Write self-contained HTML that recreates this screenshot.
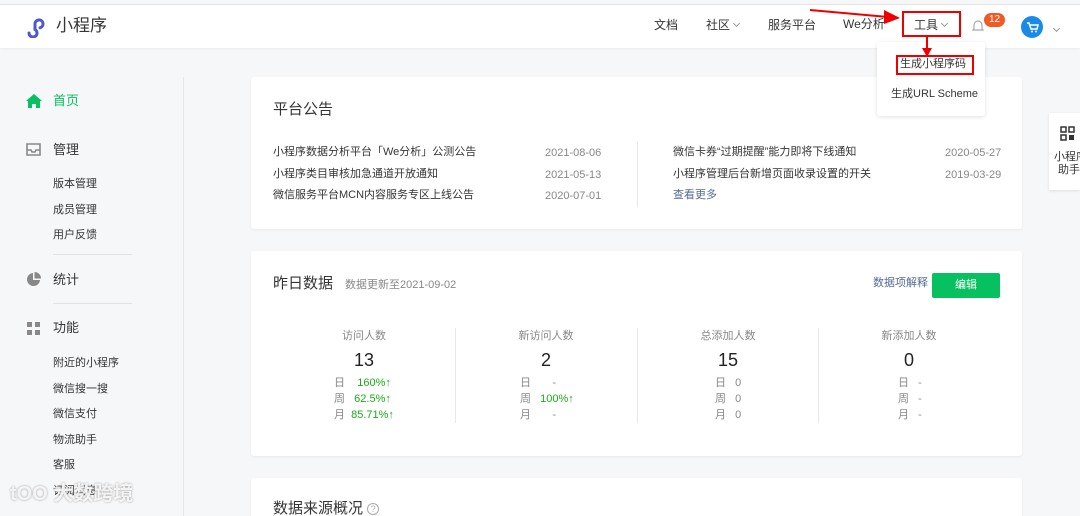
<!DOCTYPE html><html><head><meta charset="utf-8"><style>
*{margin:0;padding:0;box-sizing:border-box}
html,body{width:1080px;height:516px;overflow:hidden}
body{background:#f6f7f9;font-family:"Liberation Sans","Noto Sans CJK SC",sans-serif;color:#353535;position:relative}
.a{position:absolute;white-space:nowrap;line-height:1.25}
.hdr{position:absolute;left:0;top:4px;width:1080px;height:44px;background:#fff;border-top:1px solid #e4e4e4;box-shadow:0 1px 2px rgba(0,0,0,.05)}
.card{position:absolute;left:251px;width:771px;background:#fff;border-radius:3px;box-shadow:0 1px 2px rgba(0,0,0,.06)}
.nav{font-size:12px;color:#353535}
.sub{font-size:11px;color:#353535;left:53px}
.sep{position:absolute;left:53px;width:79px;height:1px;background:#e2e2e2}
.ann{font-size:11px;color:#353535}
.dt{font-size:11px;color:#888;top:auto}
.lbl{font-size:11px;color:#888;text-align:center;width:180px}
.num{font-size:18px;color:#222;text-align:center;width:180px}
.r{font-size:11px;color:#888}
.g{color:#1aad19}
.chev{display:inline-block;width:5px;height:5px;border-right:1px solid #999;border-bottom:1px solid #999;transform:rotate(45deg);margin-left:4px;vertical-align:3px}
</style></head><body>
<div class="hdr"></div>
<svg class="a" style="left:26px;top:16px" width="24" height="22" viewBox="0 0 24 22"><path d="M3 17a4 4 0 1 0 6-3.5V8a4 4 0 1 1 5 3.8" fill="none" stroke="#4d57cf" stroke-width="3" stroke-linecap="round"/></svg>
<div class="a" style="left:56px;top:15px;font-size:17px;color:#353535">小程序</div>
<div class="a nav" style="left:654px;top:18px">文档</div>
<div class="a nav" style="left:706px;top:18px">社区<span class="chev"></span></div>
<div class="a nav" style="left:768px;top:18px">服务平台</div>
<div class="a nav" style="left:843px;top:17px">We分析</div>
<div class="a" style="left:902px;top:11px;width:59px;height:26px;border:2px solid #e00"></div>
<div class="a nav" style="left:914px;top:18px">工具<span class="chev"></span></div>
<svg class="a" style="left:808px;top:6px" width="95" height="20"><path d="M2 4 L80 11" stroke="#e00" stroke-width="2"/><path d="M76 4 L92 12 L76 18Z" fill="#e00"/></svg>
<svg class="a" style="left:971px;top:18px" width="14" height="16"><path d="M3 11V7a4 4 0 0 1 8 0v4l1 1H2z" fill="none" stroke="#aaa" stroke-width="1.2"/></svg>
<div class="a" style="left:984px;top:13px;width:21px;height:14px;background:#f05a24;border-radius:7px;color:#fff;font-size:10px;text-align:center;line-height:14px">12</div>
<div class="a" style="left:1021px;top:16px;width:22px;height:22px;border-radius:50%;background:#1a8ae6"></div>
<svg class="a" style="left:1025px;top:20px" width="14" height="14"><path d="M2 3h2l2 6h6l1-4H5" fill="none" stroke="#fff" stroke-width="1.5"/><circle cx="7" cy="11.5" r="1" fill="#fff"/><circle cx="11" cy="11.5" r="1" fill="#fff"/></svg>
<div class="a" style="left:1050px;top:20px"><span class="chev"></span></div>

<div class="a" style="left:183px;top:77px;width:1px;height:439px;background:#e4e6e9"></div>
<svg class="a" style="left:26px;top:94px" width="16" height="14"><path d="M8 0L0 7h2v7h4v-4h4v4h4V7h2z" fill="#07c160"/></svg>
<div class="a" style="left:53px;top:93px;font-size:13px;color:#07c160">首页</div>
<svg class="a" style="left:26px;top:143px" width="15" height="13"><path d="M1 1h13v11H1z M1 7h4l1 2h3l1-2h4" fill="none" stroke="#888" stroke-width="1.6"/></svg>
<div class="a" style="left:53px;top:142px;font-size:13px">管理</div>
<div class="a sub" style="top:178px">版本管理</div>
<div class="a sub" style="top:204px">成员管理</div>
<div class="a sub" style="top:229px">用户反馈</div>
<div class="sep" style="top:254px"></div>
<svg class="a" style="left:26px;top:272px" width="15" height="15"><path d="M7 1A6.5 6.5 0 1 0 14 8H7z" fill="#888"/><path d="M8.5 0V6.5H15A6.5 6.5 0 0 0 8.5 0z" fill="#888"/></svg>
<div class="a" style="left:53px;top:272px;font-size:13px">统计</div>
<div class="sep" style="top:303px"></div>
<svg class="a" style="left:27px;top:322px" width="14" height="14"><rect x="0" y="0" width="5" height="5" fill="#888"/><rect x="8" y="0" width="5" height="5" fill="#888"/><rect x="0" y="8" width="5" height="5" fill="#888"/><rect x="8" y="8" width="5" height="5" fill="#888"/></svg>
<div class="a" style="left:53px;top:320px;font-size:13px">功能</div>
<div class="a sub" style="top:357px">附近的小程序</div>
<div class="a sub" style="top:383px">微信搜一搜</div>
<div class="a sub" style="top:408px">微信支付</div>
<div class="a sub" style="top:434px">物流助手</div>
<div class="a sub" style="top:459px">客服</div>
<div class="a sub" style="top:485px">订阅消息</div>
<div class="a" style="left:10px;top:482px;font-size:20px;color:rgba(255,255,255,.85);text-shadow:0 0 2px #999;font-weight:bold">tOO 大数跨境</div>

<div class="card" style="top:77px;height:152px"></div>
<div class="a" style="left:273px;top:101px;font-size:15px">平台公告</div>
<div class="a ann" style="left:273px;top:146px">小程序数据分析平台「We分析」公测公告</div>
<div class="a dt" style="left:545px;top:147px">2021-08-06</div>
<div class="a ann" style="left:273px;top:168px">小程序类目审核加急通道开放通知</div>
<div class="a dt" style="left:545px;top:169px">2021-05-13</div>
<div class="a ann" style="left:273px;top:189px">微信服务平台MCN内容服务专区上线公告</div>
<div class="a dt" style="left:545px;top:190px">2020-07-01</div>
<div class="a" style="left:637px;top:142px;width:1px;height:65px;background:#e8e8e8"></div>
<div class="a ann" style="left:673px;top:146px">微信卡券“过期提醒”能力即将下线通知</div>
<div class="a dt" style="left:945px;top:147px">2020-05-27</div>
<div class="a ann" style="left:673px;top:168px">小程序管理后台新增页面收录设置的开关</div>
<div class="a dt" style="left:945px;top:169px">2019-03-29</div>
<div class="a ann" style="left:673px;top:189px;color:#576b95">查看更多</div>

<div class="a" style="left:877px;top:42px;width:108px;height:74px;background:#fff;border-radius:3px;box-shadow:0 1px 4px rgba(0,0,0,.12)"></div>
<svg class="a" style="left:920px;top:36px" width="14" height="22"><path d="M7 0V14" stroke="#e00" stroke-width="2"/><path d="M2 12L7 21L12 12Z" fill="#e00"/></svg>
<div class="a" style="left:896px;top:55px;width:78px;height:20px;border:2px solid #e00"></div>
<div class="a" style="left:900px;top:58px;font-size:11px">生成小程序码</div>
<div class="a" style="left:891px;top:88px;font-size:11px">生成URL Scheme</div>
<div class="a" style="left:1049px;top:113px;width:31px;height:77px;background:#fff;box-shadow:0 1px 3px rgba(0,0,0,.1)"></div>
<svg class="a" style="left:1060px;top:126px" width="16" height="16"><rect x="1" y="1" width="5" height="5" fill="none" stroke="#333" stroke-width="1.5"/><rect x="9" y="1" width="5" height="5" fill="none" stroke="#333" stroke-width="1.5"/><rect x="1" y="9" width="5" height="5" fill="none" stroke="#333" stroke-width="1.5"/><rect x="9" y="9" width="5" height="5" fill="#333"/></svg>
<div class="a" style="left:1054px;top:151px;font-size:11px">小程序</div>
<div class="a" style="left:1058px;top:164px;font-size:11px">助手</div>

<div class="card" style="top:251px;height:205px"></div>
<div class="a" style="left:273px;top:275px;font-size:15px">昨日数据</div>
<div class="a" style="left:345px;top:279px;font-size:11px;color:#888">数据更新至2021-09-02</div>
<div class="a" style="left:873px;top:277px;font-size:11px;color:#576b95">数据项解释</div>
<div class="a" style="left:932px;top:273px;width:68px;height:25px;background:#07c160;border-radius:2px;color:#fff;font-size:11px;text-align:center;line-height:25px">编辑</div>
<div class="a" style="left:455px;top:328px;width:1px;height:95px;background:#e8e8e8"></div>
<div class="a" style="left:637px;top:328px;width:1px;height:95px;background:#e8e8e8"></div>
<div class="a" style="left:818px;top:328px;width:1px;height:95px;background:#e8e8e8"></div>

<div class="a lbl" style="left:274px;top:330px">访问人数</div>
<div class="a num" style="left:274px;top:349px">13</div>
<div class="a r" style="left:334px;top:377px">日 &nbsp;&nbsp;&nbsp;<span class="g">160%↑</span></div>
<div class="a r" style="left:334px;top:393px">周 &nbsp;&nbsp;<span class="g">62.5%↑</span></div>
<div class="a r" style="left:334px;top:409px">月 &nbsp;<span class="g">85.71%↑</span></div>

<div class="a lbl" style="left:456px;top:330px">新访问人数</div>
<div class="a num" style="left:456px;top:349px">2</div>
<div class="a r" style="left:520px;top:377px">日 &nbsp;&nbsp;&nbsp;&nbsp;&nbsp;&nbsp;-</div>
<div class="a r" style="left:520px;top:393px">周 &nbsp;&nbsp;<span class="g">100%↑</span></div>
<div class="a r" style="left:520px;top:409px">月 &nbsp;&nbsp;&nbsp;&nbsp;&nbsp;&nbsp;-</div>

<div class="a lbl" style="left:638px;top:330px">总添加人数</div>
<div class="a num" style="left:638px;top:349px">15</div>
<div class="a r" style="left:715px;top:377px">日 &nbsp;&nbsp;0</div>
<div class="a r" style="left:715px;top:393px">周 &nbsp;&nbsp;0</div>
<div class="a r" style="left:715px;top:409px">月 &nbsp;&nbsp;0</div>

<div class="a lbl" style="left:819px;top:330px">新添加人数</div>
<div class="a num" style="left:819px;top:349px">0</div>
<div class="a r" style="left:898px;top:377px">日 &nbsp;&nbsp;-</div>
<div class="a r" style="left:898px;top:393px">周 &nbsp;&nbsp;-</div>
<div class="a r" style="left:898px;top:409px">月 &nbsp;&nbsp;-</div>

<div class="card" style="top:478px;height:38px;border-radius:3px 3px 0 0"></div>
<div class="a" style="left:273px;top:500px;font-size:15px">数据来源概况 <span style="display:inline-block;width:12px;height:12px;border:1px solid #aaa;border-radius:50%;font-size:9px;color:#aaa;text-align:center;line-height:11px;vertical-align:middle">?</span></div>
</body></html>
